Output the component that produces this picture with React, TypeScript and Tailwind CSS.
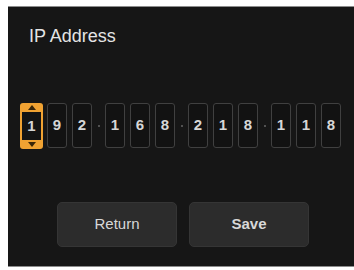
const groups = [
  ['1', '9', '2'],
  ['1', '6', '8'],
  ['2', '1', '8'],
  ['1', '1', '8'],
];

function DigitBox({ value }: { value: string }) {
  return (
    <div className="w-[20px] h-[45px] rounded-[3px] border border-[#404040] bg-[#121212] flex items-center justify-center text-[15px] font-semibold text-[#d6d6d6]">
      {value}
    </div>
  );
}

function ActiveBox({ value }: { value: string }) {
  return (
    <div className="w-[23px] h-[46px] rounded-[3px] bg-[#f0a232] flex flex-col overflow-hidden">
      <div className="h-[9px] flex items-center justify-center">
        <svg width="8" height="5" viewBox="0 0 8 5">
          <path d="M4 0 L8 5 L0 5 Z" fill="#3a2608" />
        </svg>
      </div>
      <div className="flex-1 mx-[2px] bg-[#141414] flex items-center justify-center text-[15px] font-semibold text-[#d6d6d6]">
        {value}
      </div>
      <div className="h-[9px] flex items-center justify-center">
        <svg width="8" height="5" viewBox="0 0 8 5">
          <path d="M0 0 L8 0 L4 5 Z" fill="#3a2608" />
        </svg>
      </div>
    </div>
  );
}

export default function App() {
  return (
    <div className="w-[354px] h-[270px] bg-white pl-2 pt-[6px] pb-[3px] font-['Liberation_Sans',Arial,sans-serif]">
      <div className="h-full bg-[#161616] border-y border-[#8c8c8c] flex flex-col">
        <p className="pt-[18px] pl-[21px] text-[18px] leading-[22px] text-[#e4e4e4]">IP Address</p>

        {/* ip digits */}
        <div className="mt-[56px] pl-3 flex items-start">
          {groups.map((g, gi) => (
            <div key={gi} className="flex items-start">
              {gi > 0 && (
                <div className="w-[13px] h-[45px] flex items-center justify-center">
                  <div className="w-[2px] h-[2px] rounded-full bg-[#666]" />
                </div>
              )}
              <div className="flex items-start gap-[5px]">
                {g.map((d, di) =>
                  gi === 0 && di === 0 ? (
                    <div key={di} className="-mr-[1px]">
                      <ActiveBox value={d} />
                    </div>
                  ) : (
                    <DigitBox key={di} value={d} />
                  )
                )}
              </div>
            </div>
          ))}
        </div>

        <div className="mt-[53px] pl-[49px] flex gap-3">
          <button className="w-[120px] h-[45px] rounded-[5px] border border-[#353535] bg-[#2c2c2c] text-[15px] text-[#d8d8d8]">Return</button>
          <button className="w-[120px] h-[45px] rounded-[5px] border border-[#353535] bg-[#2c2c2c] text-[15px] font-semibold text-[#d8d8d8]">Save</button>
        </div>
      </div>
    </div>
  );
}
